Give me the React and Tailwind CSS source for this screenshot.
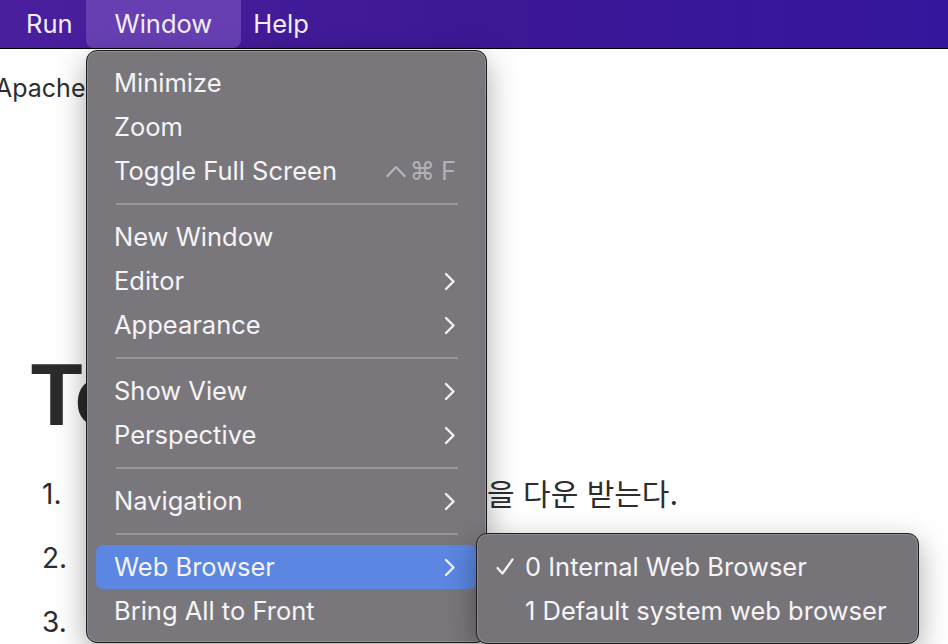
import React from "react";

const Chevron = () => (
  <svg width="12" height="19" viewBox="0 0 12 19" fill="none" className="shrink-0">
    <path d="M2 2l7.5 7.5L2 17" stroke="#f2f2f2" strokeWidth="2.4" strokeLinecap="round" strokeLinejoin="round" />
  </svg>
);

const Caret = () => (
  <svg width="20" height="14" viewBox="0 0 20 14" fill="none" className="mr-[-3px] shrink-0">
    <path d="M1.5 12L10 3 18.5 12" stroke="#b3b1b4" strokeWidth="2.4" strokeLinecap="round" strokeLinejoin="round" />
  </svg>
);

const Check = () => (
  <svg width="18" height="18" viewBox="0 0 18 18" fill="none" className="shrink-0">
    <path d="M1.5 10l5 5.5L16.5 1.5" stroke="#f2f2f2" strokeWidth="2.2" strokeLinecap="round" strokeLinejoin="round" />
  </svg>
);

const Item = ({ label, sub, shortcut, active }) => (
  <div
    className={`flex h-[44px] items-center rounded-[7px] pl-[17px] pr-[20px] ${
      active ? "-ml-px bg-[#5b86e1] pl-[18px]" : ""
    }`}
  >
    <span className="flex-1">{label}</span>
    {shortcut && (
      <span className="flex items-center gap-[6px] text-[#b3b1b4]">
        <Caret />
        <span>⌘</span>
        <span>F</span>
      </span>
    )}
    {sub && <Chevron />}
  </div>
);

const Separator = () => (
  <div className="flex h-[22px] items-center pl-[19px] pr-[18px]">
    <div className="h-[2px] w-full bg-[#989598]" />
  </div>
);

export default function App() {
  return (
    <div className="relative h-[644px] w-[948px] overflow-hidden bg-white font-['Inter','Noto_Sans_CJK_KR',sans-serif] text-[#2d2d2d]">
      {/* menu bar */}
      <div className="flex h-[49px] items-stretch border-b border-black bg-gradient-to-r from-[#4a1f9e] via-[#3d1896] to-[#33169c] pl-[26px] text-[25.5px] text-[#f1eef7]">
        <div className="flex items-center pr-[13px]">Run</div>
        <div className="flex items-center rounded-b-[8px] bg-[#673fb3] px-[29px]">Window</div>
        <div className="flex items-center pl-[12px]">Help</div>
      </div>

      {/* page behind */}
      <div className="pt-[23px] text-[25px] leading-[32px]">
        <div className="-ml-[5px]">Apache Tomcat</div>
        <h1 className="mt-[249px] pl-[30px] font-['Roboto',sans-serif] text-[86px] font-bold leading-none tracking-[-1px] text-[#2b2b2b]">
          Tomcat
        </h1>
        <ol className="mt-[23px] pl-[42px] text-[28px]">
          <li className="flex h-[64px] items-center">
            <span className="w-[52px]">1.</span>
            <span className="inline-block w-[393px]">홈페이지에서 zip 파일</span>
            <span className="text-[30px]">을 다운 받는다.</span>
          </li>
          <li className="flex h-[64px] items-center">
            <span className="w-[52px]">2.</span>
            <span>압축을 푼다.</span>
          </li>
          <li className="flex h-[64px] items-center">
            <span className="w-[52px]">3.</span>
            <span>환경 변수를 설정한다.</span>
          </li>
        </ol>
      </div>

      {/* Window menu */}
      <div className="absolute left-[86px] top-[50px] w-[401px] rounded-[11px] border border-[#1c1c1e] bg-[#7a777c] px-[10px] pb-[9px] pt-[10px] text-[25.5px] text-[#f5f4f6] shadow-[0_10px_30px_rgba(0,0,0,0.35),inset_0_0_0_1px_rgba(255,255,255,0.18)]">
        <Item label="Minimize" />
        <Item label="Zoom" />
        <Item label="Toggle Full Screen" shortcut />
        <Separator />
        <Item label="New Window" />
        <Item label="Editor" sub />
        <Item label="Appearance" sub />
        <Separator />
        <Item label="Show View" sub />
        <Item label="Perspective" sub />
        <Separator />
        <Item label="Navigation" sub />
        <Separator />
        <Item label="Web Browser" sub active />
        <Item label="Bring All to Front" />
      </div>

      {/* Web Browser submenu */}
      <div className="absolute left-[476px] top-[533px] w-[443px] rounded-[11px] border border-[#1c1c1e] bg-[#777479] px-[10px] pb-[10px] pt-[11px] text-[25.5px] text-[#f5f4f6] shadow-[0_10px_30px_rgba(0,0,0,0.35),inset_0_0_0_1px_rgba(255,255,255,0.18)]">
        <div className="flex h-[44px] items-center gap-[11px] pl-[9px]">
          <Check />
          <span>0 Internal Web Browser</span>
        </div>
        <div className="flex h-[44px] items-center gap-[11px] pl-[9px]">
          <span className="w-[18px]" />
          <span>1 Default system web browser</span>
        </div>
      </div>
    </div>
  );
}
